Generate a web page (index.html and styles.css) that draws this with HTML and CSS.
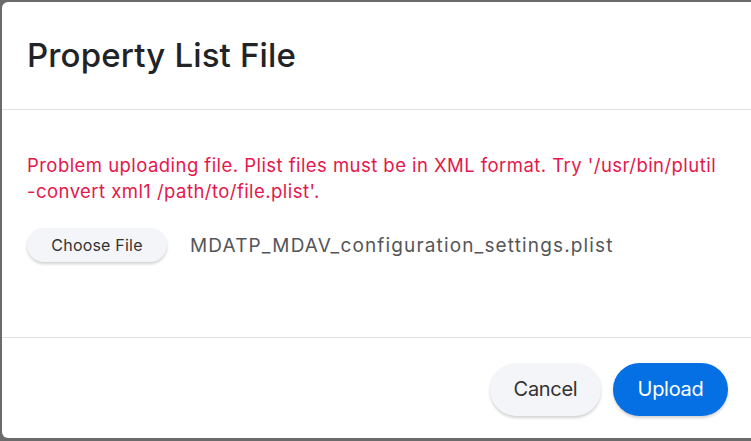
FILE: index.html
```html
<!DOCTYPE html>
<html>
<head>
<meta charset="utf-8">
<link rel="stylesheet" href="styles.css">
</head>
<body>
<div class="modal">
  <div class="modal-header">
    <h1 class="title">Property List File</h1>
  </div>
  <div class="modal-body">
    <p class="error">Problem uploading file. Plist files must be in XML format. Try '/usr/bin/plutil <span class="nowrap">-convert</span> xml1 /path/to/file.plist'.</p>
    <div class="file-row">
      <button class="choose">Choose File</button>
      <span class="filename">MDATP_MDAV_configuration_settings.plist</span>
    </div>
  </div>
  <div class="modal-footer">
    <button class="btn btn-cancel">Cancel</button>
    <button class="btn btn-upload">Upload</button>
  </div>
</div>
</body>
</html>
```
FILE: styles.css
```css
html, body {
  margin: 0;
  padding: 0;
  background: #6b6b6b;
  height: 441px;
  overflow: hidden;
}
body {
  font-family: "Inter", "Liberation Sans", sans-serif;
}
.modal {
  margin: 2px 0 0 2px;
  width: 770px;
  height: 436px;
  background: #fff;
  border-radius: 6px;
  display: flex;
  flex-direction: column;
}
.modal-header {
  height: 108px;
  border-bottom: 1px solid #e2e2e2;
  display: flex;
  align-items: center;
  padding-left: 25px;
  box-sizing: border-box;
}
.title {
  margin: 0 0 2px 0;
  font-size: 33px;
  font-weight: 500;
  color: #222326;
  letter-spacing: 0.15px;
}
.modal-body {
  height: 228px;
  border-bottom: 1px solid #e2e2e2;
  padding: 42px 20px 0 25px;
  box-sizing: border-box;
  width: 749px;
}
.error {
  margin: 0;
  color: #e4184c;
  font-size: 18.5px;
  line-height: 26px;
  letter-spacing: 0.45px;
}
.nowrap {
  white-space: nowrap;
}
.file-row {
  display: flex;
  align-items: center;
  margin-top: 24px;
}
.choose {
  width: 140px;
  height: 34px;
  border: none;
  border-radius: 17px;
  background: #f4f5f8;
  box-shadow: 0 2px 3px rgba(0,0,0,0.18);
  font-family: inherit;
  font-size: 16px;
  color: #333;
  padding: 0;
  letter-spacing: 0.2px;
}
.filename {
  margin-left: 23px;
  font-size: 19px;
  color: #555659;
  letter-spacing: 1.15px;
}
.modal-footer {
  flex: 1;
  display: flex;
  align-items: center;
  width: 749px;
  justify-content: flex-end;
  gap: 12px;
  padding: 2px 23px 0 0;
  box-sizing: border-box;
}
.btn {
  height: 53px;
  border: none;
  border-radius: 27px;
  font-family: inherit;
  font-size: 20px;
  padding: 0;
  letter-spacing: -0.3px;
}
.btn-cancel {
  width: 111px;
  background: #f4f5f8;
  color: #333;
  box-shadow: 0 2px 3px rgba(0,0,0,0.18);
}
.btn-upload {
  width: 115px;
  background: #0470e4;
  color: #fff;
  box-shadow: 0 2px 3px rgba(0,0,0,0.18);
}
```
